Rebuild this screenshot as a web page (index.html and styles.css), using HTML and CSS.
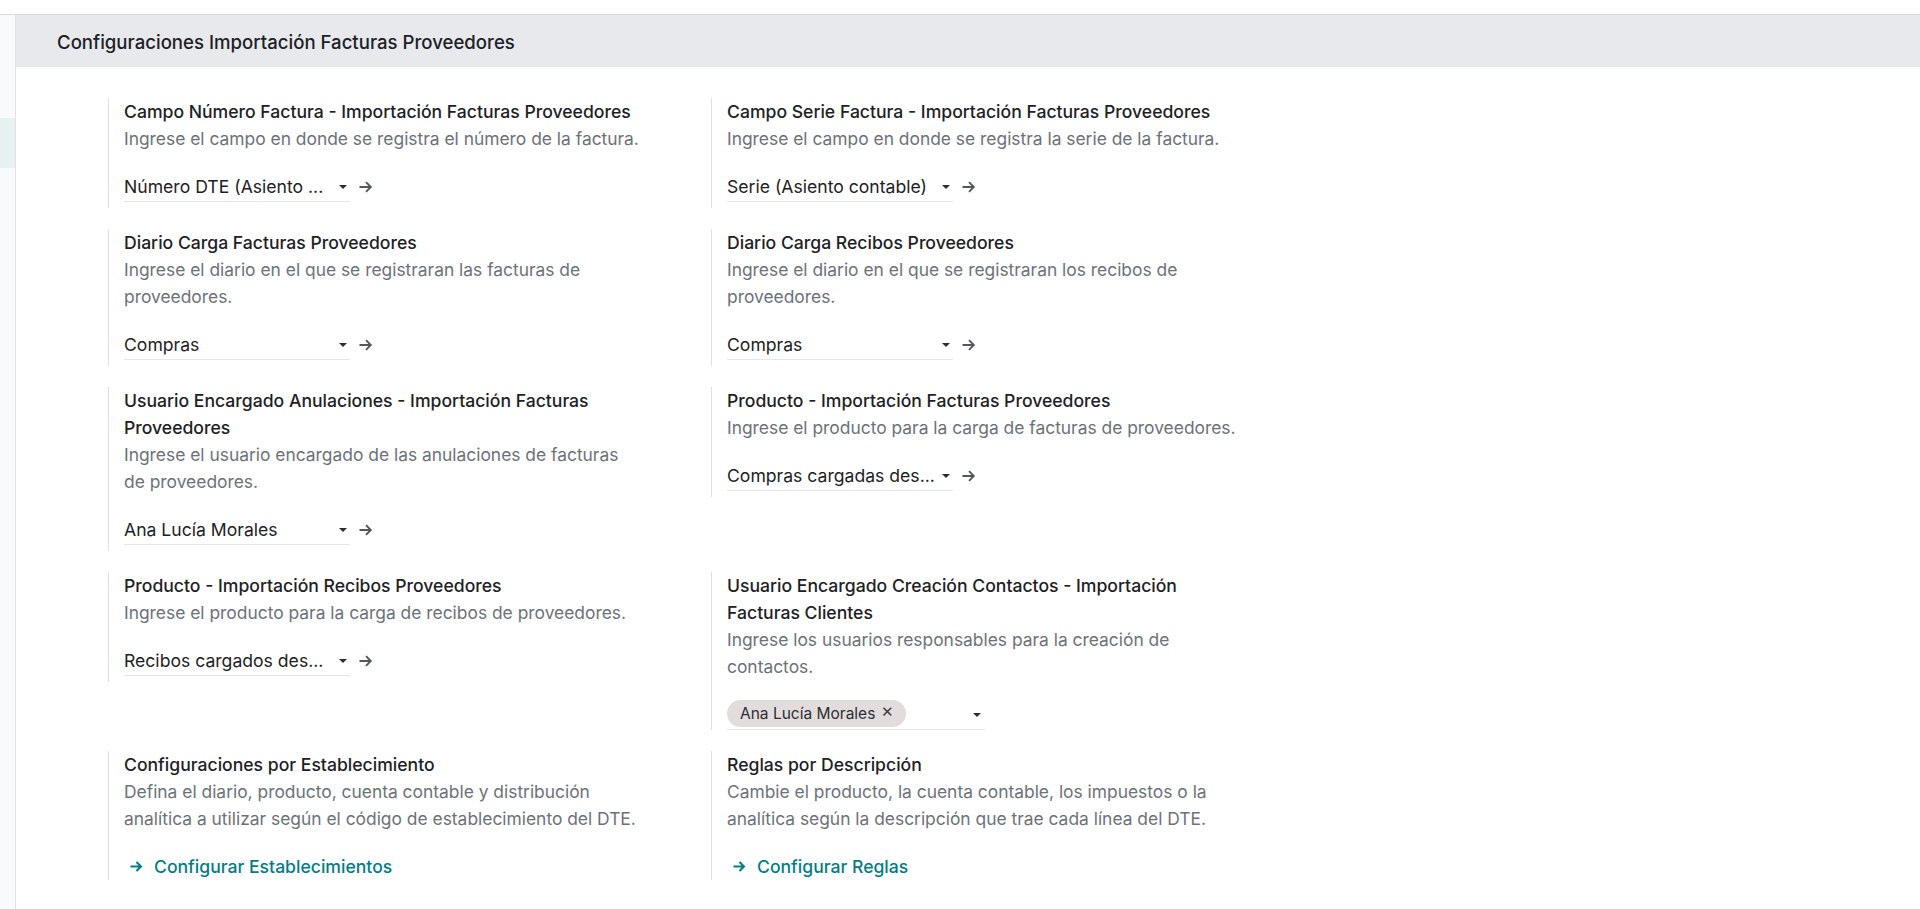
FILE: index.html
```html
<!DOCTYPE html>
<html lang="es">
<head>
<meta charset="utf-8">
<title>Configuraciones Importación Facturas Proveedores</title>
<link rel="stylesheet" href="styles.css">
</head>
<body>
<div class="topbar"></div>
<div class="app">
  <aside class="sidebar"><div class="side-active"></div></aside>
  <main class="content">
    <div class="section-header">Configuraciones Importación Facturas Proveedores</div>
    <div class="settings-grid">

      <div class="box">
        <div class="title">Campo Número Factura - Importación Facturas Proveedores</div>
        <div class="desc">Ingrese el campo en donde se registra el número de la factura.</div>
        <div class="m2o">
          <div class="input"><span class="val">Número DTE (Asiento ...</span><span class="caret"></span></div>
          <span class="ext"><svg viewBox="0 0 16 14" width="16" height="14"><path d="M1.5 7h11.5M8 2.2 12.8 7 8 11.8" fill="none" stroke="currentColor" stroke-width="1.9"/></svg></span>
        </div>
      </div>

      <div class="box">
        <div class="title">Campo Serie Factura - Importación Facturas Proveedores</div>
        <div class="desc">Ingrese el campo en donde se registra la serie de la factura.</div>
        <div class="m2o">
          <div class="input"><span class="val">Serie (Asiento contable)</span><span class="caret"></span></div>
          <span class="ext"><svg viewBox="0 0 16 14" width="16" height="14"><path d="M1.5 7h11.5M8 2.2 12.8 7 8 11.8" fill="none" stroke="currentColor" stroke-width="1.9"/></svg></span>
        </div>
      </div>

      <div class="box">
        <div class="title">Diario Carga Facturas Proveedores</div>
        <div class="desc">Ingrese el diario en el que se registraran las facturas de proveedores.</div>
        <div class="m2o">
          <div class="input"><span class="val">Compras</span><span class="caret"></span></div>
          <span class="ext"><svg viewBox="0 0 16 14" width="16" height="14"><path d="M1.5 7h11.5M8 2.2 12.8 7 8 11.8" fill="none" stroke="currentColor" stroke-width="1.9"/></svg></span>
        </div>
      </div>

      <div class="box">
        <div class="title">Diario Carga Recibos Proveedores</div>
        <div class="desc">Ingrese el diario en el que se registraran los recibos de proveedores.</div>
        <div class="m2o">
          <div class="input"><span class="val">Compras</span><span class="caret"></span></div>
          <span class="ext"><svg viewBox="0 0 16 14" width="16" height="14"><path d="M1.5 7h11.5M8 2.2 12.8 7 8 11.8" fill="none" stroke="currentColor" stroke-width="1.9"/></svg></span>
        </div>
      </div>

      <div class="box">
        <div class="title">Usuario Encargado Anulaciones - Importación Facturas Proveedores</div>
        <div class="desc">Ingrese el usuario encargado de las anulaciones de facturas de proveedores.</div>
        <div class="m2o">
          <div class="input"><span class="val">Ana Lucía Morales</span><span class="caret"></span></div>
          <span class="ext"><svg viewBox="0 0 16 14" width="16" height="14"><path d="M1.5 7h11.5M8 2.2 12.8 7 8 11.8" fill="none" stroke="currentColor" stroke-width="1.9"/></svg></span>
        </div>
      </div>

      <div class="box">
        <div class="title">Producto - Importación Facturas Proveedores</div>
        <div class="desc">Ingrese el producto para la carga de facturas de proveedores.</div>
        <div class="m2o">
          <div class="input"><span class="val">Compras cargadas des...</span><span class="caret"></span></div>
          <span class="ext"><svg viewBox="0 0 16 14" width="16" height="14"><path d="M1.5 7h11.5M8 2.2 12.8 7 8 11.8" fill="none" stroke="currentColor" stroke-width="1.9"/></svg></span>
        </div>
      </div>

      <div class="box">
        <div class="title">Producto - Importación Recibos Proveedores</div>
        <div class="desc">Ingrese el producto para la carga de recibos de proveedores.</div>
        <div class="m2o">
          <div class="input"><span class="val">Recibos cargados des...</span><span class="caret"></span></div>
          <span class="ext"><svg viewBox="0 0 16 14" width="16" height="14"><path d="M1.5 7h11.5M8 2.2 12.8 7 8 11.8" fill="none" stroke="currentColor" stroke-width="1.9"/></svg></span>
        </div>
      </div>

      <div class="box">
        <div class="title">Usuario Encargado Creación Contactos - Importación Facturas Clientes</div>
        <div class="desc">Ingrese los usuarios responsables para la creación de contactos.</div>
        <div class="tags">
          <span class="tag">Ana Lucía Morales<span class="tag-x">✕</span></span>
          <span class="caret"></span>
        </div>
      </div>

      <div class="box">
        <div class="title">Configuraciones por Establecimiento</div>
        <div class="desc">Defina el diario, producto, cuenta contable y distribución analítica a utilizar según el código de establecimiento del DTE.</div>
        <a class="link" href="#"><svg viewBox="0 0 16 14" width="15" height="13"><path d="M1.5 7h11.5M8 2.2 12.8 7 8 11.8" fill="none" stroke="currentColor" stroke-width="2.2"/></svg>Configurar Establecimientos</a>
      </div>

      <div class="box">
        <div class="title">Reglas por Descripción</div>
        <div class="desc">Cambie el producto, la cuenta contable, los impuestos o la analítica según la descripción que trae cada línea del DTE.</div>
        <a class="link" href="#"><svg viewBox="0 0 16 14" width="15" height="13"><path d="M1.5 7h11.5M8 2.2 12.8 7 8 11.8" fill="none" stroke="currentColor" stroke-width="2.2"/></svg>Configurar Reglas</a>
      </div>

    </div>
  </main>
</div>
</body>
</html>
```

FILE: styles.css
```css
* { box-sizing: border-box; }
html, body { margin: 0; padding: 0; }
body {
  width: 1920px;
  height: 909px;
  overflow: hidden;
  background: #ffffff;
  font-family: Inter, Roboto, "Liberation Sans", sans-serif;
  color: #1f2328;
}
.topbar { height: 14px; background: #ffffff; }
.app {
  display: flex;
  border-top: 1px solid #d8dadd;
  height: 895px;
}
.sidebar {
  width: 16px;
  flex: none;
  background: #f9fafb;
  border-right: 1px solid #dfe1e4;
  padding-top: 103px;
}
.side-active { height: 50px; background: #e6f1f2; }
.content { flex: 1; min-width: 0; }
.section-header {
  height: 52px;
  background: #e7e9ed;
  display: flex;
  align-items: center;
  padding-left: 41px;
  font-size: 18.6px;
  font-weight: 500;
  color: #1d2125;
  padding-top: 2px;
}
.settings-grid {
  display: grid;
  grid-template-columns: 603px 603px;
  row-gap: 21px;
  padding: 31px 0 0 92px;
  align-items: start;
}
.box {
  border-left: 1px solid #dee0e3;
  padding-left: 15px;
  width: 603px;
}
.title, .desc {
  width: 518px;
  line-height: 27px;
}
.title { font-size: 17.6px; font-weight: 500; color: #1d2125; }
.desc { font-size: 17.4px; color: #6c727a; }
.m2o {
  display: flex;
  align-items: flex-start;
  height: 36px;
  margin-top: 20px;
}
.input {
  width: 226px;
  height: 30px;
  display: flex;
  align-items: center;
  justify-content: space-between;
  border-bottom: 1px solid #e4e6e9;
  padding-right: 3px;
  font-size: 17.6px;
  line-height: 27px;
  color: #1d2125;
}
.caret {
  width: 0; height: 0;
  border-top: 4.5px solid #2a2e33;
  border-left: 4px solid transparent;
  border-right: 4px solid transparent;
}
.ext {
  display: flex;
  align-items: center;
  height: 30px;
  margin-left: 8px;
  color: #52575d;
}
.ext svg { display: block; }
.tags {
  margin-top: 20px;
  width: 258px;
  height: 30px;
  display: flex;
  align-items: center;
  justify-content: space-between;
  border-bottom: 1px solid #e4e6e9;
  padding-right: 4px;
}
.tag {
  display: inline-flex;
  align-items: center;
  height: 27px;
  padding: 0 12px 0 13px;
  border-radius: 14px;
  background: #e3dcdc;
  font-size: 15.5px;
  color: #2a2e33;
  margin-top: -2px;
}
.tag-x { margin-left: 6px; font-size: 15px; color: #3a3e43; position: relative; top: -2px; }
.link {
  display: flex;
  align-items: center;
  height: 27px;
  margin-top: 21px;
  padding-left: 5px;
  gap: 10px;
  font-size: 17.6px;
  font-weight: 500;
  color: #017e84;
  text-decoration: none;
}
.link svg { display: block; }
```
